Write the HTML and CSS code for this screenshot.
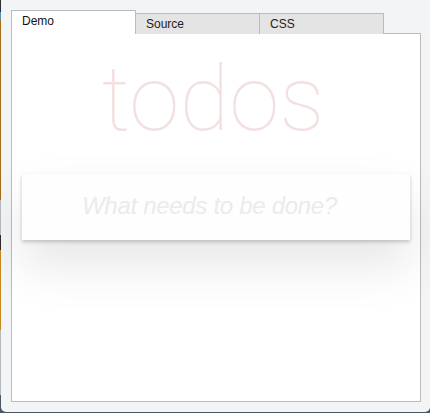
FILE: index.html
```html
<!DOCTYPE html>
<html>
<head>
<meta charset="utf-8">
<link rel="stylesheet" href="styles.css">
</head>
<body>
<div class="window">
  <div class="tabs">
    <div class="tab active">Demo</div>
    <div class="tab">Source</div>
    <div class="tab">CSS</div>
  </div>
  <div class="panel">
    <h1 class="title">todos</h1>
    <div class="todoapp">
      <input class="new-todo" type="text" placeholder="What needs to be done?">
    </div>
  </div>
</div>
</body>
</html>
```
FILE: styles.css
```css
html, body {
  margin: 0;
  padding: 0;
}
body {
  width: 430px;
  height: 413px;
  overflow: hidden;
  background: linear-gradient(to bottom, #2a2f36 0, #2a2f36 12px, #5f8fb0 12px, #5f8fb0 20px, #a66d1a 20px, #a66d1a 200px, #b5b8bd 200px, #b5b8bd 235px, #2b2b2b 235px, #2b2b2b 250px, #c58a22 250px, #c58a22 330px, #b5b8bd 330px, #b5b8bd 395px, #4a5566 395px);
  font-family: "Liberation Sans", Arial, sans-serif;
}
.window {
  margin-left: 1px;
  width: 429px;
  height: 412px;
  background: #f3f4f6;
  border-radius: 0 0 5px 5px;
  box-sizing: border-box;
  padding-top: 10px;
  padding-left: 10px;
}
.tabs {
  display: flex;
  align-items: flex-end;
  height: 24px;
  margin-bottom: -1px;
  position: relative;
  z-index: 1;
}
.tab {
  box-sizing: border-box;
  width: 125px;
  height: 21px;
  border: 1px solid #bbbbbb;
  border-bottom: none;
  background: #e4e4e4;
  color: #222;
  font-size: 12px;
  line-height: 14px;
  padding: 3px 0 0 10px;
  margin-left: -1px;
}
.tab:first-child {
  margin-left: 0;
}
.tab.active {
  height: 24px;
  background: #ffffff;
  color: #111;
}
.panel {
  box-sizing: border-box;
  width: 410px;
  height: 369px;
  background: #fff;
  border: 1px solid #bbbbbb;
  padding: 0 10px;
}
.title {
  margin: 15px 0 0;
  text-align: center;
  font-family: Roboto, "Liberation Sans", sans-serif;
  font-weight: 100;
  font-size: 91px;
  line-height: 100px;
  color: rgba(175, 47, 47, 0.15);
  padding-right: 6px;
}
.todoapp {
  margin-top: 25px;
  background: #fff;
  box-shadow: 0 2px 4px rgba(0, 0, 0, 0.2), 0 25px 50px 0 rgba(0, 0, 0, 0.1);
}
.new-todo {
  display: block;
  box-sizing: border-box;
  width: 100%;
  height: 66px;
  margin: 0;
  border: none;
  outline: none;
  background: rgba(0, 0, 0, 0.003);
  padding: 15px 16px 17px 60px;
  font-family: "Liberation Sans", Arial, sans-serif;
  font-size: 24px;
  font-style: italic;
  font-weight: 300;
  letter-spacing: -0.3px;
  color: #4d4d4d;
}
.new-todo::placeholder {
  color: #ebebeb;
  font-style: italic;
}
```
